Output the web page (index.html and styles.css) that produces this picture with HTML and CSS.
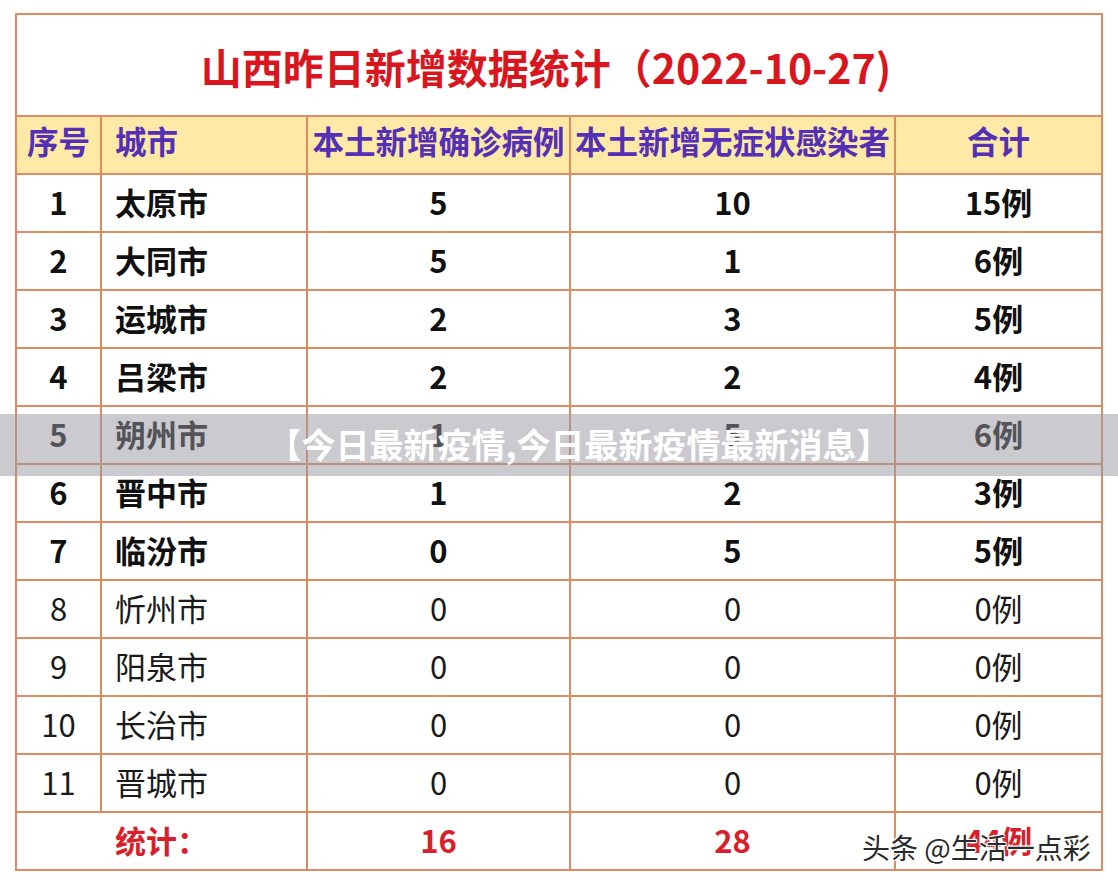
FILE: index.html
```html
<!DOCTYPE html>
<html lang="zh-CN">
<head>
<meta charset="utf-8">
<title>山西昨日新增数据统计</title>
<link rel="stylesheet" href="styles.css">
</head>
<body>
<div class="page">
  <table class="stats">
    <colgroup>
      <col class="c-no"><col class="c-city"><col class="c-confirmed"><col class="c-asym"><col class="c-total">
    </colgroup>
    <tr class="title-row"><td colspan="5" class="title">山西昨日新增数据统计（2022-10-27)</td></tr>
    <tr class="head">
      <th>序号</th><th class="city">城市</th><th>本土新增确诊病例</th><th>本土新增无症状感染者</th><th>合计</th>
    </tr>
    <tr class="bold"><td>1</td><td class="city">太原市</td><td>5</td><td>10</td><td>15例</td></tr>
    <tr class="bold"><td>2</td><td class="city">大同市</td><td>5</td><td>1</td><td>6例</td></tr>
    <tr class="bold"><td>3</td><td class="city">运城市</td><td>2</td><td>3</td><td>5例</td></tr>
    <tr class="bold"><td>4</td><td class="city">吕梁市</td><td>2</td><td>2</td><td>4例</td></tr>
    <tr class="bold"><td>5</td><td class="city">朔州市</td><td>1</td><td>5</td><td>6例</td></tr>
    <tr class="bold"><td>6</td><td class="city">晋中市</td><td>1</td><td>2</td><td>3例</td></tr>
    <tr class="bold"><td>7</td><td class="city">临汾市</td><td>0</td><td>5</td><td>5例</td></tr>
    <tr><td>8</td><td class="city">忻州市</td><td>0</td><td>0</td><td>0例</td></tr>
    <tr><td>9</td><td class="city">阳泉市</td><td>0</td><td>0</td><td>0例</td></tr>
    <tr><td>10</td><td class="city">长治市</td><td>0</td><td>0</td><td>0例</td></tr>
    <tr><td>11</td><td class="city">晋城市</td><td>0</td><td>0</td><td>0例</td></tr>
    <tr class="sum"><td colspan="2">统计：</td><td>16</td><td>28</td><td>44例</td></tr>
  </table>
  <div class="banner">【今日最新疫情,今日最新疫情最新消息】</div>
  <div class="watermark">头条 @生活一点彩</div>
</div>
</body>
</html>
```

FILE: styles.css
```css
html, body {
  margin: 0;
  padding: 0;
  background: #ffffff;
}
.page {
  position: relative;
  width: 1118px;
  height: 890px;
  overflow: hidden;
  padding: 13px 0 0 15px;
  box-sizing: border-box;
  font-family: "Noto Sans CJK SC", "Noto Sans", sans-serif;
}
.stats {
  border-collapse: collapse;
  table-layout: fixed;
  width: 1086px;
  border: 2px solid #de8a62;
}
.c-no { width: 85px; }
.c-city { width: 206px; }
.c-confirmed { width: 263px; }
.c-asym { width: 325px; }
.c-total { width: 207px; }
.stats td, .stats th {
  border: 2px solid #de8a62;
  padding: 0 0 4px 0;
  text-align: center;
  vertical-align: middle;
  font-size: 31px;
  line-height: 1;
  color: #1a1a1a;
  font-weight: 400;
  white-space: nowrap;
}
.stats tr { height: 58px; }
.stats .title-row { height: 102px; }
.stats td.title {
  color: #d9161e;
  font-size: 41px;
  font-weight: 700;
  padding: 3px 26px 0 0;
}
.stats .head th {
  background: #fee9a6;
  color: #5330b6;
  font-weight: 700;
  font-size: 31.5px;
  padding-bottom: 8px;
}
.stats .city {
  text-align: left;
  padding-left: 13px;
}
.stats .bold td {
  font-weight: 700;
  color: #111111;
}
.stats .sum td {
  color: #d8202a;
  font-weight: 700;
}
.banner {
  position: absolute;
  left: 0;
  right: 0;
  top: 414px;
  height: 62px;
  background: rgba(150, 150, 160, 0.5);
  color: #ffffff;
  font-size: 34px;
  font-weight: 700;
  line-height: 60px;
  text-align: center;
  padding-left: 40px;
  box-sizing: border-box;
}
.watermark {
  position: absolute;
  left: 862px;
  top: 829px;
  font-size: 28px;
  line-height: 36px;
  color: #2a2a2a;
  text-shadow: 1px 1px 0 #ffffff, -1px -1px 0 #ffffff, 1px -1px 0 #ffffff, -1px 1px 0 #ffffff, 0 0 3px #ffffff;
}
```
